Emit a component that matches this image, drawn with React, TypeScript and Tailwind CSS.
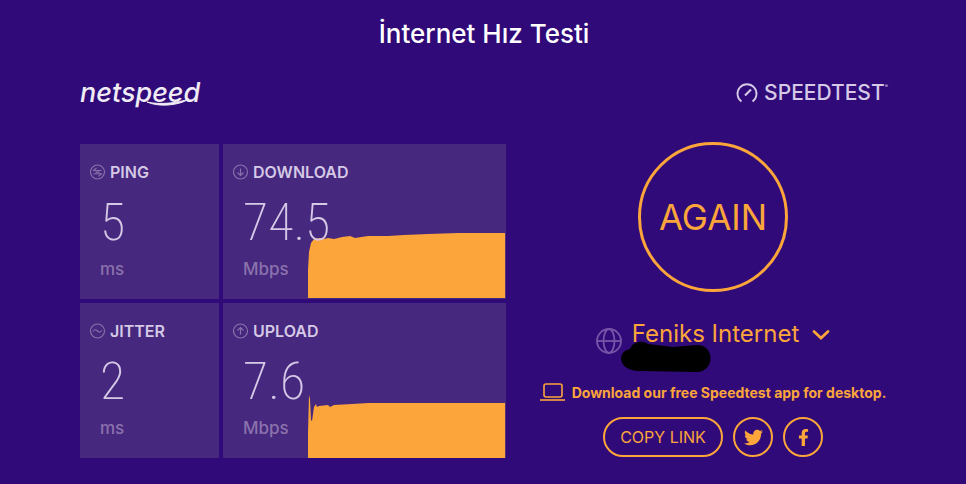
import React from 'react';
import { FaFacebookF, FaTwitter } from 'react-icons/fa';

interface MetricProps {
  label: string;
  value: string;
  unit: string;
  icon: React.ReactNode;
  chart?: string;
}

const RingIcon: React.FC<{ d: string }> = ({ d }) => (
  <svg viewBox="0 0 16 16" className="w-4 h-4 shrink-0 text-[#8b72ac]" fill="none" stroke="currentColor" strokeWidth="1.1" aria-hidden="true">
    <circle cx="7.5" cy="8" r="7" />
    <path d={d} />
  </svg>
);

const Metric: React.FC<MetricProps> = ({ label, value, unit, icon, chart }) => (
  <section className="relative bg-[#46287e] px-[10px] pt-[18px] pb-5 overflow-hidden">
    {chart && (
      <svg
        viewBox="0 0 198 155"
        preserveAspectRatio="none"
        className="absolute bottom-0 right-0 h-full w-[70%] text-[#fba53b]"
        aria-hidden="true"
      >
        <path d={chart} fill="currentColor" />
      </svg>
    )}
    <div className="relative">
      <h2 className="flex items-center gap-1 h-5 text-[16px] font-semibold text-[#d5c9e6]">
        {icon}
        {label}
      </h2>
      <p className="pl-[10px] mt-[13px] h-14 leading-[56px] text-[52px] font-extralight text-[#d5c9e6] font-['Roboto_Condensed','Liberation_Sans_Narrow',Roboto,sans-serif]">
        {value}
      </p>
      <p className="pl-[10px] mt-2 h-5 leading-5 text-[17px] font-medium text-[#8b72ac]">{unit}</p>
    </div>
  </section>
);

const NetspeedLogo = () => (
  <a href="#" className="relative block w-[124px] pt-[2px] text-[27px] leading-7 font-medium italic text-[#f0ecf5]">
    netspeed
    <svg viewBox="0 0 46 9" className="absolute left-[66px] top-[21px] w-[46px] h-[9px]" aria-hidden="true">
      <path d="M1 4 C12 9 32 8 43 1 C32 5 14 7 1 4Z" fill="currentColor" stroke="currentColor" strokeWidth="1" />
    </svg>
  </a>
);

const SpeedtestLogo = () => (
  <a href="#" className="flex items-center gap-[6px] pt-[2px] text-[21px] leading-6 font-medium text-[#d5c9e6]">
    <svg viewBox="0 0 22 20" className="w-[22px] h-5" fill="none" stroke="currentColor" strokeWidth="1.8" aria-hidden="true">
      <path d="M5.5 18.5 A9.5 9.5 0 1 1 16.5 18.5" />
      <path d="M9 12.5 L15 6.5" strokeWidth="2.2" />
    </svg>
    <span>
      SPEEDTEST<sup className="text-[5px] -top-3">®</sup>
    </span>
  </a>
);

const DOWNLOAD_CHART =
  'M0 154 V126 L1 108 L3 99 L6 95 L12 94 L16 95 L20 94 L26 95 L34 93 L42 92 L47 94 L60 92 L80 92 L96 91 L120 90 L150 89 L197 89 V154 Z';
const UPLOAD_CHART =
  'M0 155 V130 L1 92 L2 96 L3 117 L4 118 L6 104 L8 101 L9 104 L11 103 L20 102 L22 104 L26 102 L44 101 L60 100 L100 100 L197 100 V155 Z';

export default function App() {
  return (
    <div className="min-h-screen bg-[#300a78] pl-20 pr-[78px] pt-4 pb-6 font-[Inter,sans-serif]">
      <h1 className="text-center text-[26px] leading-9 font-medium text-white">İnternet Hız Testi</h1>

      <header className="mt-6 flex h-8 items-center justify-between">
        <NetspeedLogo />
        <SpeedtestLogo />
      </header>

      <main className="mt-[34px] grid grid-cols-[426fr_350fr] gap-8">
        <div className="mt-[2px] grid grid-cols-[139fr_283fr] grid-rows-2 gap-1">
          <Metric
            label="PING"
            value="5"
            unit="ms"
            icon={<RingIcon d="M11.5 6.5 H3.5 L6.5 3.8 M5.5 8.1 H9.5 M3.5 9.7 H11.5 L8.5 12.4" />}
          />
          <Metric
            label="DOWNLOAD"
            value="74.5"
            unit="Mbps"
            icon={<RingIcon d="M7.5 4.5 V11.5 M4.5 8.5 L7.5 11.5 L10.5 8.5" />}
            chart={DOWNLOAD_CHART}
          />
          <Metric label="JITTER" value="2" unit="ms" icon={<RingIcon d="M3 8.5 C4.5 6 6 6.5 7.5 8 S10.5 9.5 12 7.5" />} />
          <Metric
            label="UPLOAD"
            value="7.6"
            unit="Mbps"
            icon={<RingIcon d="M7.5 11.5 V4.5 M4.5 7.5 L7.5 4.5 L10.5 7.5" />}
            chart={UPLOAD_CHART}
          />
        </div>

        <div className="flex flex-col items-center text-[#fba53b]">
          <button className="size-[150px] rounded-full border-[3px] border-[#fba53b] text-[35px]">AGAIN</button>

          {/* Server selection */}
          <div className="relative mt-[26px] flex h-9 gap-[10px]">
            <svg viewBox="0 0 26 26" className="size-[26px] self-end text-[#7854a8]" fill="none" stroke="currentColor" strokeWidth="1.8" aria-hidden="true">
              <circle cx="13" cy="13" r="12" />
              <ellipse cx="13" cy="13" rx="5.5" ry="12" />
              <path d="M1 13 H25" />
            </svg>
            <button className="flex h-8 items-center gap-[13px] text-[24px] whitespace-nowrap">
              Feniks Internet
              <svg viewBox="0 0 18 12" className="w-[18px] h-3" fill="none" stroke="currentColor" strokeWidth="2.8" strokeLinecap="round" aria-hidden="true">
                <path d="M2 3.5 L9 10 L16 3.5" />
              </svg>
            </button>
            <svg viewBox="0 0 90 32" className="absolute left-[25px] top-[22px] w-[90px] h-8" aria-hidden="true">
              <path d="M9 9 C12 1 22 0 27 4 L52 7 L76 5 C94 5 94 31 76 32 L17 31 C-4 30 -4 11 9 9Z" fill="#000" />
            </svg>
          </div>

          <a href="#" className="mt-7 flex h-5 items-center gap-[6px] text-[14px] font-bold whitespace-nowrap">
            <svg viewBox="0 0 26 18" className="w-[26px] h-[18px]" fill="none" stroke="currentColor" strokeWidth="1.6" aria-hidden="true">
              <rect x="4" y="1" width="18" height="13" rx="2" />
              <path d="M0 17 H25" />
            </svg>
            Download our free Speedtest app for desktop.
          </a>

          <div className="mt-[15px] flex gap-[10px]">
            <button className="h-10 w-[120px] rounded-full border-2 border-[#fba53b] text-[16px] whitespace-nowrap">COPY LINK</button>
            <a href="#" aria-label="Twitter" className="flex size-10 items-center justify-center rounded-full border-2 border-[#fba53b]">
              <FaTwitter size={19} />
            </a>
            <a href="#" aria-label="Facebook" className="flex size-10 items-center justify-center rounded-full border-2 border-[#fba53b]">
              <FaFacebookF size={17} />
            </a>
          </div>
        </div>
      </main>
    </div>
  );
}
